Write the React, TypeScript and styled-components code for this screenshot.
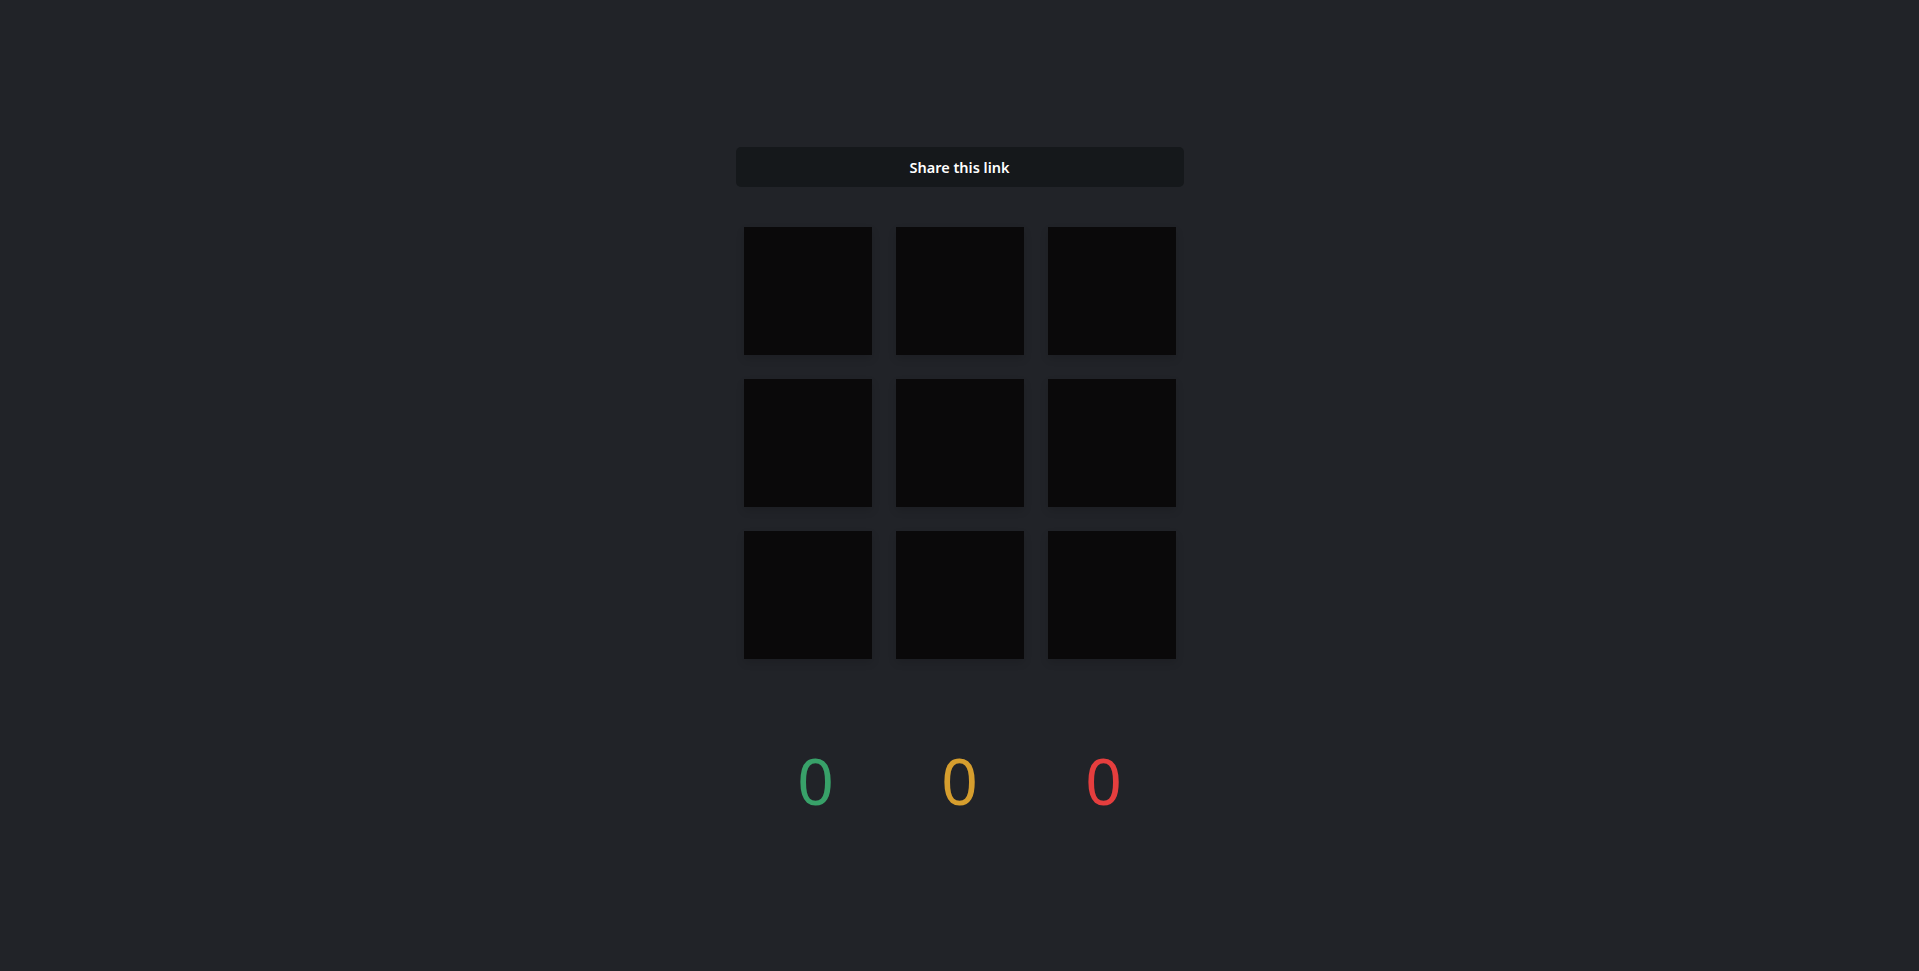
import styled, { createGlobalStyle } from 'styled-components';

const GlobalStyle = createGlobalStyle`
  * {
    box-sizing: border-box;
  }
  body {
    margin: 0;
    background-color: #212328;
    font-family: 'Noto Sans', 'Open Sans', sans-serif;
  }
`;

const scores = [
  { value: 0, color: '#38a169' },
  { value: 0, color: '#d69e2e' },
  { value: 0, color: '#e53e3e' },
];

const App = () => {
  return (
    <>
      <GlobalStyle />
      <Page>
        <Board>
          <ShareButton>Share this link</ShareButton>
          <Grid>
            {Array.from({ length: 9 }).map((_, index) => (
              <Cell key={index} />
            ))}
          </Grid>
        </Board>
        <Scores>
          {scores.map((s, index) => (
            <Score key={index} $color={s.color}>
              {s.value}
            </Score>
          ))}
        </Scores>
      </Page>
    </>
  );
};

const Page = styled.main`
  min-height: 100vh;
  display: flex;
  flex-direction: column;
  align-items: center;
  padding-top: 147px;
`;

const Board = styled.div`
  width: 448px;
  display: flex;
  flex-direction: column;
  align-items: center;
`;

const ShareButton = styled.button`
  width: 100%;
  height: 40px;
  border: none;
  border-radius: 5px;
  background-color: #15181b;
  color: #ffffff;
  font-family: 'Noto Sans', sans-serif;
  font-size: 14.5px;
  font-weight: 600;
  cursor: pointer;
`;

const Grid = styled.div`
  margin-top: 40px;
  display: grid;
  grid-template-columns: repeat(3, 128px);
  gap: 24px;
`;

const Cell = styled.div`
  width: 128px;
  height: 128px;
  background-color: #0a090a;
  box-shadow: 0px 4px 8px rgba(0, 0, 0, 0.12);
`;

const Scores = styled.div`
  margin-top: 90px;
  width: 432px;
  display: grid;
  grid-template-columns: repeat(3, 1fr);
`;

const Score = styled.span<{ $color: string }>`
  text-align: center;
  font-size: 64px;
  font-weight: 400;
  line-height: 1;
  color: ${(p) => p.$color};
`;

export default App;
